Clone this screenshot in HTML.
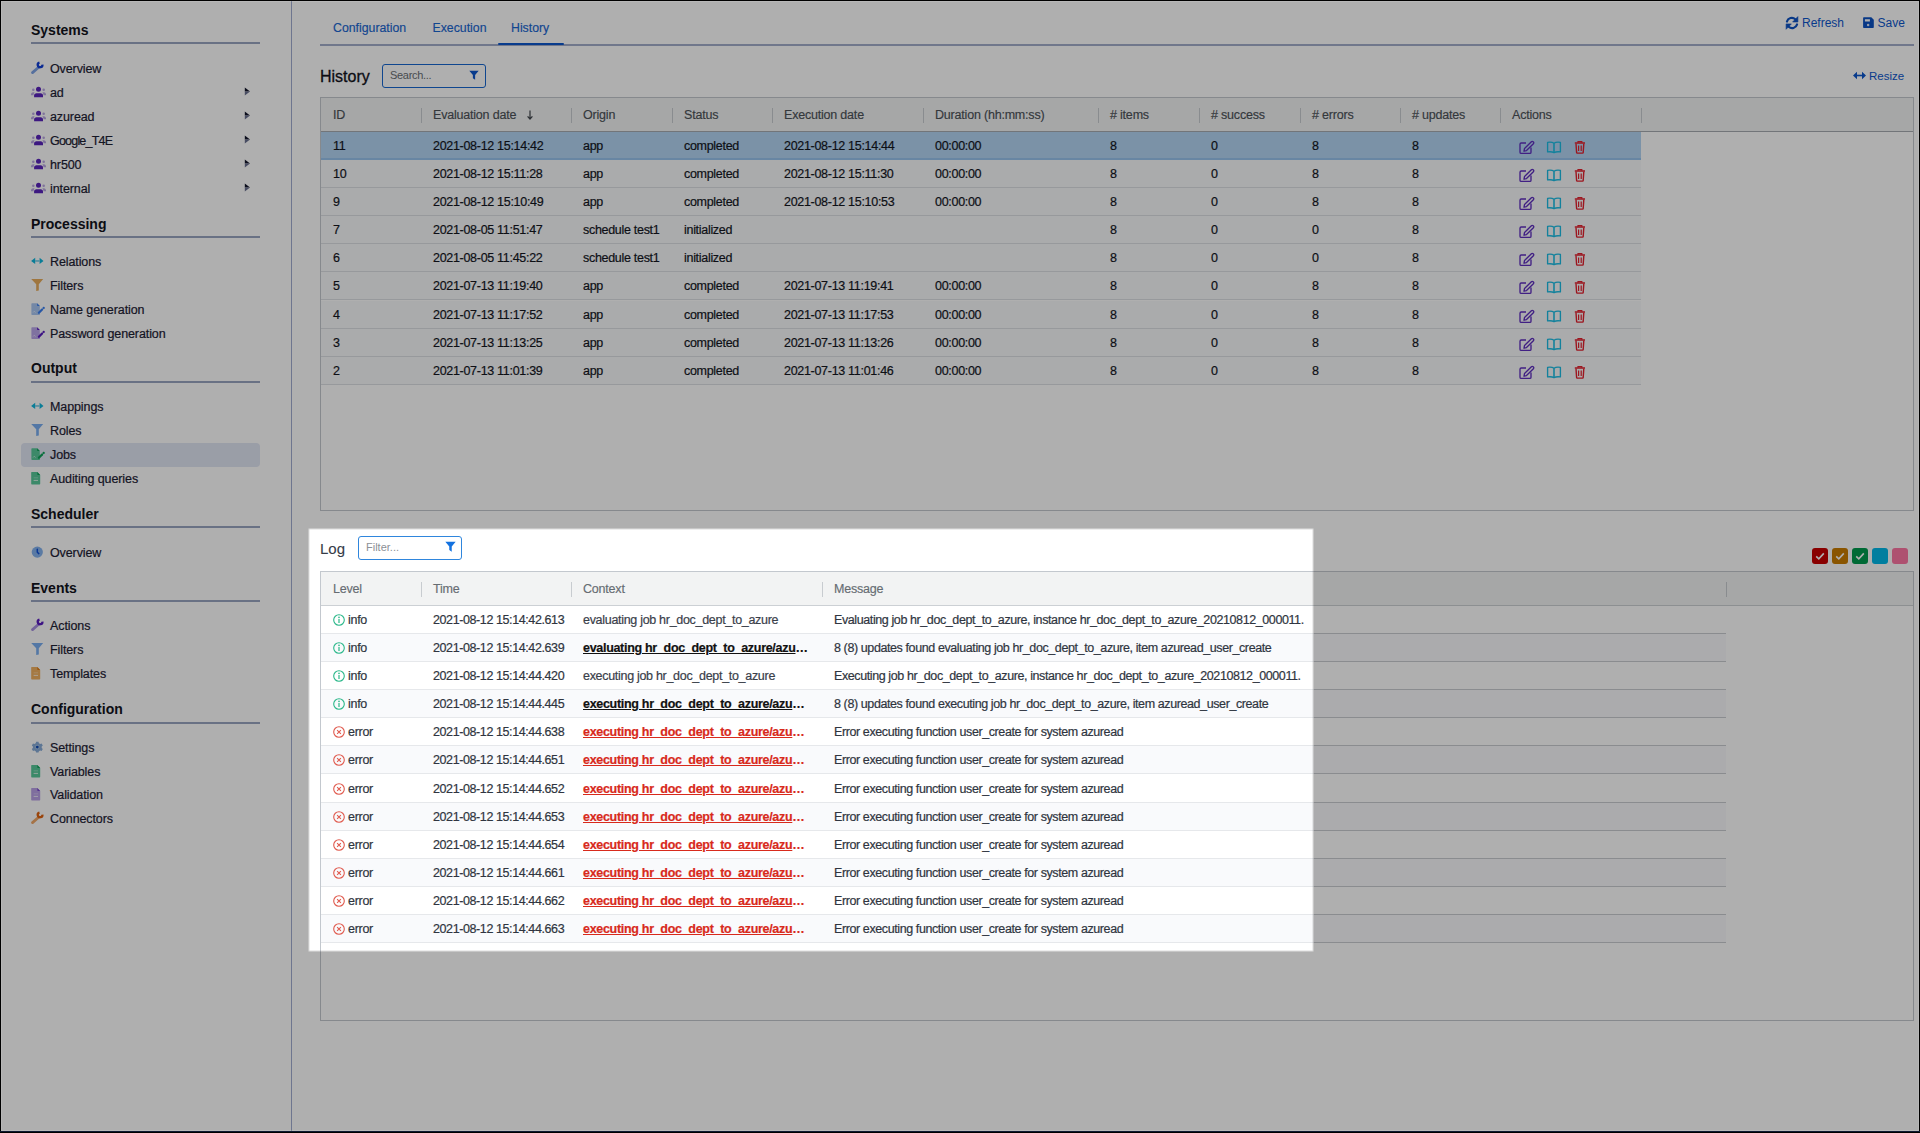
<!DOCTYPE html>
<html><head><meta charset="utf-8"><style>
*{box-sizing:border-box;margin:0;padding:0}
html,body{width:1920px;height:1133px;overflow:hidden;background:#fff;font-family:"Liberation Sans", sans-serif;color:#2c3340}
.ic{position:absolute;overflow:visible}
.sh{position:absolute;left:31px;font-size:14px;font-weight:700;color:#12131c;line-height:18px;white-space:nowrap}
.shl{position:absolute;left:31px;width:229px;height:2px;background:#9aa5c0}
.si{-webkit-text-stroke:0.2px currentColor;position:absolute;left:50px;font-size:12.5px;letter-spacing:-0.1px;color:#1c2033;line-height:20px;white-space:nowrap}
.jobsel{position:absolute;left:21px;top:443px;width:239px;height:24px;background:#e1e6f4;border-radius:4px}
#sidebar{position:absolute;left:0;top:0;width:292px;height:1133px;border-right:1px solid #a0acd0}
.tab{-webkit-text-stroke:0.15px currentColor;position:absolute;top:20px;font-size:12.3px;color:#1966d2;line-height:16px;white-space:nowrap}
.tbl{position:absolute;border:1px solid #c3c8ce;background:#fff;overflow:hidden}
.thead{position:absolute;left:0;top:0;right:0;background:#f2f3f3;border-bottom:1px solid #a6abb0}
.th{-webkit-text-stroke:0.15px currentColor;position:absolute;top:0.5px;height:33px;line-height:33px;padding-left:12px;font-size:12.5px;letter-spacing:-0.2px;color:#4c5258;white-space:nowrap}
.sep{position:absolute;top:10px;width:1px;height:15px;background:#c8ccd0}
.sort{font-size:12px;padding-left:6px}
.tr{position:absolute;left:0;height:28px;border-bottom:1px solid #dcdfe3;background:#fff}
.tr.alt{background:#f8f9fb}
.tr.hr{background:#f8f9fb}
.tr.sel{background:#b3d5f3;border-bottom:2px solid #98c4ee}
.td{-webkit-text-stroke:0.2px currentColor;position:absolute;top:1px;height:27px;line-height:27px;padding-left:12px;font-size:12.5px;letter-spacing:-0.3px;color:#14171f;white-space:nowrap;overflow:hidden;text-overflow:ellipsis}
.ai{position:absolute;top:7px;width:18px;height:16px;overflow:visible}
.log .th{color:#666c72}
.log .thead{border-bottom-color:#ccd0d4}
.log .tr{border-bottom:1px solid #e6e8eb}
.log .tr.lalt{background:#f9fafc}
.log .td{color:#2f3540}
.log .msg{letter-spacing:-0.4px}
.log .ctx{padding-right:14px}
.log .ctx{color:#3a404a}
.log .lnk{font-weight:700;color:#111;text-decoration:underline}
.log .red{color:#d82a1c}
.li{position:absolute;left:12px;top:7px;width:12px;height:12px}
.inp{position:absolute;border:1px solid #2f86dd;border-radius:3px;background:#fff}
.inp span{position:absolute;left:7px;top:0;line-height:21px;font-size:11px;color:#8c9096}
.frame{position:absolute;background:#000}
</style></head><body>
<div id="sidebar">
<div class="sh" style="top:21.4px">Systems</div>
<div class="shl" style="top:42.4px"></div>
<div class="sh" style="top:215.4px">Processing</div>
<div class="shl" style="top:235.5px"></div>
<div class="sh" style="top:359.4px">Output</div>
<div class="shl" style="top:381.4px"></div>
<div class="sh" style="top:504.9px">Scheduler</div>
<div class="shl" style="top:526.4px"></div>
<div class="sh" style="top:578.9px">Events</div>
<div class="shl" style="top:599.6px"></div>
<div class="sh" style="top:699.9px">Configuration</div>
<div class="shl" style="top:722.0px"></div>
<div class="si" style="top:58.5px">Overview</div>
<svg class="ic" style="left:28px;top:57.7px;width:20px;height:20px" viewBox="0 0 20 20"><path d="M4.5 14.6 L9.8 10" stroke="#7ea4e6" stroke-width="2.8" stroke-linecap="round"/><path d="M11.5 4.6 A2.35 2.35 0 1 0 14.4 6.6" stroke="#0f3ed6" stroke-width="2.3" fill="none"/></svg>
<div class="si" style="top:82.5px">ad</div>
<svg class="ic" style="left:28px;top:81.7px;width:20px;height:20px" viewBox="0 0 20 20"><circle cx="10.5" cy="7.3" r="2.5" fill="#5a24bc"/><path d="M6.1 15.3 V13.6 C6.1 12.2 7.1 11.3 8.4 11.3 H12.7 C14 11.3 15 12.2 15 13.6 V15.3Z" fill="#5a24bc"/><circle cx="5.3" cy="7.8" r="1.25" fill="#b9a6e2"/><circle cx="15.7" cy="7.8" r="1.25" fill="#b9a6e2"/><path d="M2.9 13.3 C2.9 11.2 3.8 10.3 5.4 10.3 C6.1 10.3 6.5 10.5 6.8 10.8 C5.9 11.4 5.5 12.3 5.5 13.3Z" fill="#b9a6e2"/><path d="M18.1 13.3 C18.1 11.2 17.2 10.3 15.6 10.3 C14.9 10.3 14.5 10.5 14.2 10.8 C15.1 11.4 15.5 12.3 15.5 13.3Z" fill="#b9a6e2"/></svg>
<svg class="ic" style="left:244px;top:86.5px;width:7px;height:9px" viewBox="0 0 7 9"><path d="M0.8 0.4 L6 4.6 H0.8Z" fill="#12152a"/><path d="M0.8 4.6 H6 L0.8 8.6Z" fill="#6a7090"/></svg>
<div class="si" style="top:106.5px">azuread</div>
<svg class="ic" style="left:28px;top:105.7px;width:20px;height:20px" viewBox="0 0 20 20"><circle cx="10.5" cy="7.3" r="2.5" fill="#5a24bc"/><path d="M6.1 15.3 V13.6 C6.1 12.2 7.1 11.3 8.4 11.3 H12.7 C14 11.3 15 12.2 15 13.6 V15.3Z" fill="#5a24bc"/><circle cx="5.3" cy="7.8" r="1.25" fill="#b9a6e2"/><circle cx="15.7" cy="7.8" r="1.25" fill="#b9a6e2"/><path d="M2.9 13.3 C2.9 11.2 3.8 10.3 5.4 10.3 C6.1 10.3 6.5 10.5 6.8 10.8 C5.9 11.4 5.5 12.3 5.5 13.3Z" fill="#b9a6e2"/><path d="M18.1 13.3 C18.1 11.2 17.2 10.3 15.6 10.3 C14.9 10.3 14.5 10.5 14.2 10.8 C15.1 11.4 15.5 12.3 15.5 13.3Z" fill="#b9a6e2"/></svg>
<svg class="ic" style="left:244px;top:110.5px;width:7px;height:9px" viewBox="0 0 7 9"><path d="M0.8 0.4 L6 4.6 H0.8Z" fill="#12152a"/><path d="M0.8 4.6 H6 L0.8 8.6Z" fill="#6a7090"/></svg>
<div class="si" style="top:130.5px;letter-spacing:-0.8px">Google_T4E</div>
<svg class="ic" style="left:28px;top:129.7px;width:20px;height:20px" viewBox="0 0 20 20"><circle cx="10.5" cy="7.3" r="2.5" fill="#5a24bc"/><path d="M6.1 15.3 V13.6 C6.1 12.2 7.1 11.3 8.4 11.3 H12.7 C14 11.3 15 12.2 15 13.6 V15.3Z" fill="#5a24bc"/><circle cx="5.3" cy="7.8" r="1.25" fill="#b9a6e2"/><circle cx="15.7" cy="7.8" r="1.25" fill="#b9a6e2"/><path d="M2.9 13.3 C2.9 11.2 3.8 10.3 5.4 10.3 C6.1 10.3 6.5 10.5 6.8 10.8 C5.9 11.4 5.5 12.3 5.5 13.3Z" fill="#b9a6e2"/><path d="M18.1 13.3 C18.1 11.2 17.2 10.3 15.6 10.3 C14.9 10.3 14.5 10.5 14.2 10.8 C15.1 11.4 15.5 12.3 15.5 13.3Z" fill="#b9a6e2"/></svg>
<svg class="ic" style="left:244px;top:134.5px;width:7px;height:9px" viewBox="0 0 7 9"><path d="M0.8 0.4 L6 4.6 H0.8Z" fill="#12152a"/><path d="M0.8 4.6 H6 L0.8 8.6Z" fill="#6a7090"/></svg>
<div class="si" style="top:154.8px">hr500</div>
<svg class="ic" style="left:28px;top:154.0px;width:20px;height:20px" viewBox="0 0 20 20"><circle cx="10.5" cy="7.3" r="2.5" fill="#5a24bc"/><path d="M6.1 15.3 V13.6 C6.1 12.2 7.1 11.3 8.4 11.3 H12.7 C14 11.3 15 12.2 15 13.6 V15.3Z" fill="#5a24bc"/><circle cx="5.3" cy="7.8" r="1.25" fill="#b9a6e2"/><circle cx="15.7" cy="7.8" r="1.25" fill="#b9a6e2"/><path d="M2.9 13.3 C2.9 11.2 3.8 10.3 5.4 10.3 C6.1 10.3 6.5 10.5 6.8 10.8 C5.9 11.4 5.5 12.3 5.5 13.3Z" fill="#b9a6e2"/><path d="M18.1 13.3 C18.1 11.2 17.2 10.3 15.6 10.3 C14.9 10.3 14.5 10.5 14.2 10.8 C15.1 11.4 15.5 12.3 15.5 13.3Z" fill="#b9a6e2"/></svg>
<svg class="ic" style="left:244px;top:158.8px;width:7px;height:9px" viewBox="0 0 7 9"><path d="M0.8 0.4 L6 4.6 H0.8Z" fill="#12152a"/><path d="M0.8 4.6 H6 L0.8 8.6Z" fill="#6a7090"/></svg>
<div class="si" style="top:179.1px">internal</div>
<svg class="ic" style="left:28px;top:178.3px;width:20px;height:20px" viewBox="0 0 20 20"><circle cx="10.5" cy="7.3" r="2.5" fill="#5a24bc"/><path d="M6.1 15.3 V13.6 C6.1 12.2 7.1 11.3 8.4 11.3 H12.7 C14 11.3 15 12.2 15 13.6 V15.3Z" fill="#5a24bc"/><circle cx="5.3" cy="7.8" r="1.25" fill="#b9a6e2"/><circle cx="15.7" cy="7.8" r="1.25" fill="#b9a6e2"/><path d="M2.9 13.3 C2.9 11.2 3.8 10.3 5.4 10.3 C6.1 10.3 6.5 10.5 6.8 10.8 C5.9 11.4 5.5 12.3 5.5 13.3Z" fill="#b9a6e2"/><path d="M18.1 13.3 C18.1 11.2 17.2 10.3 15.6 10.3 C14.9 10.3 14.5 10.5 14.2 10.8 C15.1 11.4 15.5 12.3 15.5 13.3Z" fill="#b9a6e2"/></svg>
<svg class="ic" style="left:244px;top:183.1px;width:7px;height:9px" viewBox="0 0 7 9"><path d="M0.8 0.4 L6 4.6 H0.8Z" fill="#12152a"/><path d="M0.8 4.6 H6 L0.8 8.6Z" fill="#6a7090"/></svg>
<div class="si" style="top:251.9px">Relations</div>
<svg class="ic" style="left:28px;top:251.1px;width:20px;height:20px" viewBox="0 0 20 20"><path d="M3.1 9.9 L7.2 6.8 V13Z M15.5 9.9 L11.6 6.8 V13Z" fill="#0fb6dc"/><rect x="7" y="9.1" width="4.8" height="1.7" fill="#7fd2ea"/></svg>
<div class="si" style="top:275.8px">Filters</div>
<svg class="ic" style="left:28px;top:275.0px;width:20px;height:20px" viewBox="0 0 20 20"><path d="M3.2 4 H15.2 L10.8 9.2 V15.6 L8.2 16 V9.2Z" fill="#e8ad5c"/></svg>
<div class="si" style="top:299.7px">Name generation</div>
<svg class="ic" style="left:28px;top:298.9px;width:20px;height:20px" viewBox="0 0 20 20"><path d="M4 4.3 H9.2 L11.8 7 V15.9 H4 C3.6 15.9 3.4 15.6 3.4 15.3 V4.9 C3.4 4.6 3.6 4.3 4 4.3Z" fill="#a9c6f2"/><path d="M9.1 4.3 L11.8 7.1 H9.6 C9.3 7.1 9.1 6.9 9.1 6.6Z" fill="#3a7ff0"/><path d="M10.9 13.7 L14.1 10.5" stroke="#3a7ff0" stroke-width="2.3" stroke-linecap="round"/><circle cx="15.7" cy="8.9" r="1.15" fill="#3a7ff0"/><path d="M5 13.6 L6.3 12.2 L7.6 13.6" stroke="#fff" stroke-width="0.8" fill="none" opacity="0.6"/></svg>
<div class="si" style="top:323.6px">Password generation</div>
<svg class="ic" style="left:28px;top:322.8px;width:20px;height:20px" viewBox="0 0 20 20"><path d="M4 4.3 H9.2 L11.8 7 V15.9 H4 C3.6 15.9 3.4 15.6 3.4 15.3 V4.9 C3.4 4.6 3.6 4.3 4 4.3Z" fill="#baa6ea"/><path d="M9.1 4.3 L11.8 7.1 H9.6 C9.3 7.1 9.1 6.9 9.1 6.6Z" fill="#5a1cc0"/><path d="M10.9 13.7 L14.1 10.5" stroke="#5a1cc0" stroke-width="2.3" stroke-linecap="round"/><circle cx="15.7" cy="8.9" r="1.15" fill="#5a1cc0"/><path d="M5 13.6 L6.3 12.2 L7.6 13.6" stroke="#fff" stroke-width="0.8" fill="none" opacity="0.6"/></svg>
<div class="si" style="top:396.5px">Mappings</div>
<svg class="ic" style="left:28px;top:395.7px;width:20px;height:20px" viewBox="0 0 20 20"><path d="M3.1 9.9 L7.2 6.8 V13Z M15.5 9.9 L11.6 6.8 V13Z" fill="#0fb6dc"/><rect x="7" y="9.1" width="4.8" height="1.7" fill="#7fd2ea"/></svg>
<div class="si" style="top:421.0px">Roles</div>
<svg class="ic" style="left:28px;top:420.2px;width:20px;height:20px" viewBox="0 0 20 20"><path d="M3.2 4 H15.2 L10.8 9.2 V15.6 L8.2 16 V9.2Z" fill="#7aaef0"/></svg>
<div class="jobsel"></div>
<div class="si" style="top:445.0px">Jobs</div>
<svg class="ic" style="left:28px;top:444.2px;width:20px;height:20px" viewBox="0 0 20 20"><path d="M4 4.3 H9.2 L11.8 7 V15.9 H4 C3.6 15.9 3.4 15.6 3.4 15.3 V4.9 C3.4 4.6 3.6 4.3 4 4.3Z" fill="#58c89a"/><path d="M9.1 4.3 L11.8 7.1 H9.6 C9.3 7.1 9.1 6.9 9.1 6.6Z" fill="#0ea35a"/><path d="M10.9 13.7 L14.1 10.5" stroke="#0ea35a" stroke-width="2.3" stroke-linecap="round"/><circle cx="15.7" cy="8.9" r="1.15" fill="#0ea35a"/><path d="M5 13.6 L6.3 12.2 L7.6 13.6" stroke="#fff" stroke-width="0.8" fill="none" opacity="0.6"/></svg>
<div class="si" style="top:468.9px">Auditing queries</div>
<svg class="ic" style="left:28px;top:468.1px;width:20px;height:20px" viewBox="0 0 20 20"><path d="M3.8 4 H9.4 L12.2 6.9 V15.8 C12.2 16.1 11.9 16.4 11.6 16.4 H3.8 C3.5 16.4 3.2 16.1 3.2 15.8 V4.6 C3.2 4.3 3.5 4 3.8 4Z" fill="#58c89a"/><path d="M9.3 4 L12.2 6.9 H9.9 C9.6 6.9 9.3 6.6 9.3 6.3Z" fill="#0ea35a"/><rect x="5.6" y="9.4" width="4.4" height="0.9" fill="#fff" opacity="0.35"/><rect x="5.6" y="11.9" width="4.4" height="1" fill="#fff" opacity="0.75"/></svg>
<div class="si" style="top:543.0px">Overview</div>
<svg class="ic" style="left:28px;top:542.2px;width:20px;height:20px" viewBox="0 0 20 20"><circle cx="9.3" cy="10.1" r="5.6" fill="#84b2ee"/><path d="M9.3 7.3 V10.3 L10.8 11.6" stroke="#0f50d8" stroke-width="1.5" fill="none" stroke-linecap="round" stroke-linejoin="round"/></svg>
<div class="si" style="top:615.9px">Actions</div>
<svg class="ic" style="left:28px;top:615.1px;width:20px;height:20px" viewBox="0 0 20 20"><path d="M4.5 14.6 L9.8 10" stroke="#a890e0" stroke-width="2.8" stroke-linecap="round"/><path d="M11.5 4.6 A2.35 2.35 0 1 0 14.4 6.6" stroke="#5a1cc0" stroke-width="2.3" fill="none"/></svg>
<div class="si" style="top:639.9px">Filters</div>
<svg class="ic" style="left:28px;top:639.1px;width:20px;height:20px" viewBox="0 0 20 20"><path d="M3.2 4 H15.2 L10.8 9.2 V15.6 L8.2 16 V9.2Z" fill="#7aaef0"/></svg>
<div class="si" style="top:663.9px">Templates</div>
<svg class="ic" style="left:28px;top:663.1px;width:20px;height:20px" viewBox="0 0 20 20"><path d="M3.8 4 H9.4 L12.2 6.9 V15.8 C12.2 16.1 11.9 16.4 11.6 16.4 H3.8 C3.5 16.4 3.2 16.1 3.2 15.8 V4.6 C3.2 4.3 3.5 4 3.8 4Z" fill="#f0b060"/><path d="M9.3 4 L12.2 6.9 H9.9 C9.6 6.9 9.3 6.6 9.3 6.3Z" fill="#e07a10"/><rect x="5.6" y="9.4" width="4.4" height="0.9" fill="#fff" opacity="0.35"/><rect x="5.6" y="11.9" width="4.4" height="1" fill="#fff" opacity="0.75"/></svg>
<div class="si" style="top:738.0px">Settings</div>
<svg class="ic" style="left:28px;top:737.2px;width:20px;height:20px" viewBox="0 0 20 20"><g transform="translate(9.3 10.1)"><path d="M-1.2 -5.4 H1.2 L1.6 -3.9 L2.9 -3.2 L4.3 -3.7 L5.5 -1.6 L4.4 -0.6 V0.8 L5.5 1.8 L4.3 3.9 L2.9 3.4 L1.6 4.1 L1.2 5.5 H-1.2 L-1.6 4.1 L-2.9 3.4 L-4.3 3.9 L-5.5 1.8 L-4.4 0.8 V-0.6 L-5.5 -1.6 L-4.3 -3.7 L-2.9 -3.2 L-1.6 -3.9Z" fill="#88acd8"/><circle r="2.3" fill="#fff" opacity="0.25"/><circle r="1.4" fill="#0f4cb8"/></g></svg>
<div class="si" style="top:762.0px">Variables</div>
<svg class="ic" style="left:28px;top:761.2px;width:20px;height:20px" viewBox="0 0 20 20"><path d="M3.8 4 H9.4 L12.2 6.9 V15.8 C12.2 16.1 11.9 16.4 11.6 16.4 H3.8 C3.5 16.4 3.2 16.1 3.2 15.8 V4.6 C3.2 4.3 3.5 4 3.8 4Z" fill="#58c89a"/><path d="M9.3 4 L12.2 6.9 H9.9 C9.6 6.9 9.3 6.6 9.3 6.3Z" fill="#0ea35a"/><rect x="5.6" y="9.4" width="4.4" height="0.9" fill="#fff" opacity="0.35"/><rect x="5.6" y="11.9" width="4.4" height="1" fill="#fff" opacity="0.75"/></svg>
<div class="si" style="top:785.1px">Validation</div>
<svg class="ic" style="left:28px;top:784.3px;width:20px;height:20px" viewBox="0 0 20 20"><path d="M3.8 4 H9.4 L12.2 6.9 V15.8 C12.2 16.1 11.9 16.4 11.6 16.4 H3.8 C3.5 16.4 3.2 16.1 3.2 15.8 V4.6 C3.2 4.3 3.5 4 3.8 4Z" fill="#b9a0e6"/><path d="M9.3 4 L12.2 6.9 H9.9 C9.6 6.9 9.3 6.6 9.3 6.3Z" fill="#7a48d0"/><rect x="5.6" y="9.4" width="4.4" height="0.9" fill="#fff" opacity="0.35"/><rect x="5.6" y="11.9" width="4.4" height="1" fill="#fff" opacity="0.75"/></svg>
<div class="si" style="top:809.1px">Connectors</div>
<svg class="ic" style="left:28px;top:808.3px;width:20px;height:20px" viewBox="0 0 20 20"><path d="M4.5 14.6 L9.8 10" stroke="#f0a868" stroke-width="2.8" stroke-linecap="round"/><path d="M11.5 4.6 A2.35 2.35 0 1 0 14.4 6.6" stroke="#e06410" stroke-width="2.3" fill="none"/></svg>
</div>

<div class="tab" style="left:333px">Configuration</div>
<div class="tab" style="left:432.5px">Execution</div>
<div class="tab" style="left:511px">History</div>
<div style="position:absolute;left:320px;top:44px;width:1594px;height:1.6px;background:#a3aecb"></div>
<div style="position:absolute;left:498px;top:42.8px;width:65.5px;height:2.4px;background:#0d56cc;border-radius:1px"></div>
<svg class="ic" style="left:1782px;top:13px;width:20px;height:20px" viewBox="0 0 20 20"><path d="M4.9 8.6 A5.1 5.1 0 0 1 13.3 6.3" stroke="#0d52c4" stroke-width="2.1" fill="none" stroke-linecap="round"/><path d="M15.9 3.6 V9 H10.6Z" fill="#0d52c4" stroke="#0d52c4" stroke-width="0.6" stroke-linejoin="round"/><path d="M15.1 11.4 A5.1 5.1 0 0 1 6.7 13.7" stroke="#0d52c4" stroke-width="2.1" fill="none" stroke-linecap="round"/><path d="M4.1 10.9 H9.4 L4.1 16.3Z" fill="#0d52c4" stroke="#0d52c4" stroke-width="0.6" stroke-linejoin="round"/></svg>
<div style="position:absolute;left:1802px;top:15px;font-size:12px;line-height:16px;color:#0d56cc">Refresh</div>
<svg class="ic" style="left:1859px;top:13px;width:20px;height:20px" viewBox="0 0 20 20"><path d="M5.1 4.2 H12.3 L14.8 6.8 V14 C14.8 14.6 14.4 15 13.8 15 H5.1 C4.5 15 4.1 14.6 4.1 14 V5.2 C4.1 4.6 4.5 4.2 5.1 4.2Z M5.9 6.2 V8.6 H10.9 V6.2Z" fill="#0d52c4" fill-rule="evenodd"/><circle cx="9.1" cy="12.1" r="1.25" fill="#fff" opacity="0.85"/></svg>
<div style="position:absolute;left:1877.5px;top:15px;font-size:12px;line-height:16px;color:#0d56cc">Save</div>
<div style="position:absolute;left:320px;top:68px;font-size:16px;line-height:18px;color:#12131c;-webkit-text-stroke:0.3px currentColor">History</div>
<div class="inp" style="left:382px;top:64px;width:104px;height:24px;border-width:1.5px;border-color:#1766d0"><span style="color:#6a6f74;letter-spacing:-0.3px">Search...</span></div>
<svg class="ic" style="left:469px;top:70px;width:10px;height:10px" viewBox="0 0 16 16"><path d="M0.5 1 H15.5 L9.8 8 V15.5 L6.2 13 V8Z" fill="#0d56cc"/></svg>
<svg class="ic" style="left:1853px;top:71px;width:13px;height:9px" viewBox="0 0 13 9"><path d="M0 4.5 L4 0.8 V8.2Z M13 4.5 L9 0.8 V8.2Z" fill="#0d56cc"/><rect x="3" y="3.7" width="7" height="1.6" fill="#0d56cc"/></svg>
<div style="position:absolute;left:1869px;top:68px;font-size:11.5px;line-height:16px;color:#0d56cc">Resize</div>

<div class="tbl" style="left:320px;top:97px;width:1594px;height:414px">
<div class="thead" style="height:34px">
<div class="th" style="left:0px;width:100px">ID</div><div class="sep" style="left:100px"></div>
<div class="th" style="left:100px;width:150px">Evaluation date<svg style="position:absolute;left:106px;top:11px;width:6px;height:10px" viewBox="0 0 6 10"><path d="M3 0.5 V9 M0.6 6.4 L3 9 L5.4 6.4" stroke="#40464c" stroke-width="1.2" fill="none"/></svg></div><div class="sep" style="left:250px"></div>
<div class="th" style="left:250px;width:101px">Origin</div><div class="sep" style="left:351px"></div>
<div class="th" style="left:351px;width:100px">Status</div><div class="sep" style="left:451px"></div>
<div class="th" style="left:451px;width:151px">Execution date</div><div class="sep" style="left:602px"></div>
<div class="th" style="left:602px;width:175px">Duration (hh:mm:ss)</div><div class="sep" style="left:777px"></div>
<div class="th" style="left:777px;width:101px"># items</div><div class="sep" style="left:878px"></div>
<div class="th" style="left:878px;width:101px"># success</div><div class="sep" style="left:979px"></div>
<div class="th" style="left:979px;width:100px"># errors</div><div class="sep" style="left:1079px"></div>
<div class="th" style="left:1079px;width:100px"># updates</div><div class="sep" style="left:1179px"></div>
<div class="th" style="left:1179px;width:141px">Actions</div><div class="sep" style="left:1320px"></div>
</div>
<div class="tr sel" style="top:34.00px;width:1320px">
<div class="td" style="left:0px;width:100px">11</div>
<div class="td" style="left:100px;width:150px">2021-08-12 15:14:42</div>
<div class="td" style="left:250px;width:101px">app</div>
<div class="td" style="left:351px;width:100px">completed</div>
<div class="td" style="left:451px;width:151px">2021-08-12 15:14:44</div>
<div class="td" style="left:602px;width:175px">00:00:00</div>
<div class="td" style="left:777px;width:101px">8</div>
<div class="td" style="left:878px;width:101px">0</div>
<div class="td" style="left:979px;width:100px">8</div>
<div class="td" style="left:1079px;width:100px">8</div>
<svg class="ai" style="left:1197px" viewBox="0 0 18 16"><path d="M8 4 H3.2 C2.5 4 2 4.5 2 5.2 V13.2 C2 13.9 2.5 14.4 3.2 14.4 H11.8 C12.5 14.4 13 13.9 13 13.2 V8.5" stroke="#5f2fc0" stroke-width="1.35" fill="none"/><path d="M6 12.2 L6.5 9.6 L13.4 2.7 C13.9 2.2 14.6 2.2 15.1 2.7 L15.4 3 C15.9 3.5 15.9 4.2 15.4 4.7 L8.5 11.6Z" stroke="#5f2fc0" stroke-width="1.35" fill="none" stroke-linejoin="round"/></svg><svg class="ai" style="left:1224px" viewBox="0 0 18 16"><path d="M9 4.2 C7.6 3.2 5 2.9 2.6 3.3 V12.9 C5 12.6 7.6 12.8 9 13.6 C10.4 12.8 13 12.6 15.4 12.9 V3.3 C13 2.9 10.4 3.2 9 4.2Z" stroke="#1cbde4" stroke-width="1.35" fill="none" stroke-linejoin="round"/><path d="M9 4.2 V13.6" stroke="#1cbde4" stroke-width="1.6"/></svg><svg class="ai" style="left:1251px" viewBox="0 0 18 16"><path d="M2.8 4 H13" stroke="#e3202e" stroke-width="1.5"/><path d="M6 3.8 V2.6 H9.8 V3.8" stroke="#e3202e" stroke-width="1.2" fill="none"/><path d="M4 4.6 L4.6 13.4 C4.6 13.8 4.9 14.1 5.3 14.1 H10.5 C10.9 14.1 11.2 13.8 11.2 13.4 L11.8 4.6" stroke="#e3202e" stroke-width="1.4" fill="none"/><path d="M6.6 6.5 V12 M9.2 6.5 V12" stroke="#e3202e" stroke-width="1.2"/></svg>
</div>
<div class="tr hr" style="top:62.09px;width:1320px">
<div class="td" style="left:0px;width:100px">10</div>
<div class="td" style="left:100px;width:150px">2021-08-12 15:11:28</div>
<div class="td" style="left:250px;width:101px">app</div>
<div class="td" style="left:351px;width:100px">completed</div>
<div class="td" style="left:451px;width:151px">2021-08-12 15:11:30</div>
<div class="td" style="left:602px;width:175px">00:00:00</div>
<div class="td" style="left:777px;width:101px">8</div>
<div class="td" style="left:878px;width:101px">0</div>
<div class="td" style="left:979px;width:100px">8</div>
<div class="td" style="left:1079px;width:100px">8</div>
<svg class="ai" style="left:1197px" viewBox="0 0 18 16"><path d="M8 4 H3.2 C2.5 4 2 4.5 2 5.2 V13.2 C2 13.9 2.5 14.4 3.2 14.4 H11.8 C12.5 14.4 13 13.9 13 13.2 V8.5" stroke="#5f2fc0" stroke-width="1.35" fill="none"/><path d="M6 12.2 L6.5 9.6 L13.4 2.7 C13.9 2.2 14.6 2.2 15.1 2.7 L15.4 3 C15.9 3.5 15.9 4.2 15.4 4.7 L8.5 11.6Z" stroke="#5f2fc0" stroke-width="1.35" fill="none" stroke-linejoin="round"/></svg><svg class="ai" style="left:1224px" viewBox="0 0 18 16"><path d="M9 4.2 C7.6 3.2 5 2.9 2.6 3.3 V12.9 C5 12.6 7.6 12.8 9 13.6 C10.4 12.8 13 12.6 15.4 12.9 V3.3 C13 2.9 10.4 3.2 9 4.2Z" stroke="#1cbde4" stroke-width="1.35" fill="none" stroke-linejoin="round"/><path d="M9 4.2 V13.6" stroke="#1cbde4" stroke-width="1.6"/></svg><svg class="ai" style="left:1251px" viewBox="0 0 18 16"><path d="M2.8 4 H13" stroke="#e3202e" stroke-width="1.5"/><path d="M6 3.8 V2.6 H9.8 V3.8" stroke="#e3202e" stroke-width="1.2" fill="none"/><path d="M4 4.6 L4.6 13.4 C4.6 13.8 4.9 14.1 5.3 14.1 H10.5 C10.9 14.1 11.2 13.8 11.2 13.4 L11.8 4.6" stroke="#e3202e" stroke-width="1.4" fill="none"/><path d="M6.6 6.5 V12 M9.2 6.5 V12" stroke="#e3202e" stroke-width="1.2"/></svg>
</div>
<div class="tr hr" style="top:90.18px;width:1320px">
<div class="td" style="left:0px;width:100px">9</div>
<div class="td" style="left:100px;width:150px">2021-08-12 15:10:49</div>
<div class="td" style="left:250px;width:101px">app</div>
<div class="td" style="left:351px;width:100px">completed</div>
<div class="td" style="left:451px;width:151px">2021-08-12 15:10:53</div>
<div class="td" style="left:602px;width:175px">00:00:00</div>
<div class="td" style="left:777px;width:101px">8</div>
<div class="td" style="left:878px;width:101px">0</div>
<div class="td" style="left:979px;width:100px">8</div>
<div class="td" style="left:1079px;width:100px">8</div>
<svg class="ai" style="left:1197px" viewBox="0 0 18 16"><path d="M8 4 H3.2 C2.5 4 2 4.5 2 5.2 V13.2 C2 13.9 2.5 14.4 3.2 14.4 H11.8 C12.5 14.4 13 13.9 13 13.2 V8.5" stroke="#5f2fc0" stroke-width="1.35" fill="none"/><path d="M6 12.2 L6.5 9.6 L13.4 2.7 C13.9 2.2 14.6 2.2 15.1 2.7 L15.4 3 C15.9 3.5 15.9 4.2 15.4 4.7 L8.5 11.6Z" stroke="#5f2fc0" stroke-width="1.35" fill="none" stroke-linejoin="round"/></svg><svg class="ai" style="left:1224px" viewBox="0 0 18 16"><path d="M9 4.2 C7.6 3.2 5 2.9 2.6 3.3 V12.9 C5 12.6 7.6 12.8 9 13.6 C10.4 12.8 13 12.6 15.4 12.9 V3.3 C13 2.9 10.4 3.2 9 4.2Z" stroke="#1cbde4" stroke-width="1.35" fill="none" stroke-linejoin="round"/><path d="M9 4.2 V13.6" stroke="#1cbde4" stroke-width="1.6"/></svg><svg class="ai" style="left:1251px" viewBox="0 0 18 16"><path d="M2.8 4 H13" stroke="#e3202e" stroke-width="1.5"/><path d="M6 3.8 V2.6 H9.8 V3.8" stroke="#e3202e" stroke-width="1.2" fill="none"/><path d="M4 4.6 L4.6 13.4 C4.6 13.8 4.9 14.1 5.3 14.1 H10.5 C10.9 14.1 11.2 13.8 11.2 13.4 L11.8 4.6" stroke="#e3202e" stroke-width="1.4" fill="none"/><path d="M6.6 6.5 V12 M9.2 6.5 V12" stroke="#e3202e" stroke-width="1.2"/></svg>
</div>
<div class="tr hr" style="top:118.27px;width:1320px">
<div class="td" style="left:0px;width:100px">7</div>
<div class="td" style="left:100px;width:150px">2021-08-05 11:51:47</div>
<div class="td" style="left:250px;width:101px">schedule test1</div>
<div class="td" style="left:351px;width:100px">initialized</div>
<div class="td" style="left:451px;width:151px"></div>
<div class="td" style="left:602px;width:175px"></div>
<div class="td" style="left:777px;width:101px">8</div>
<div class="td" style="left:878px;width:101px">0</div>
<div class="td" style="left:979px;width:100px">0</div>
<div class="td" style="left:1079px;width:100px">8</div>
<svg class="ai" style="left:1197px" viewBox="0 0 18 16"><path d="M8 4 H3.2 C2.5 4 2 4.5 2 5.2 V13.2 C2 13.9 2.5 14.4 3.2 14.4 H11.8 C12.5 14.4 13 13.9 13 13.2 V8.5" stroke="#5f2fc0" stroke-width="1.35" fill="none"/><path d="M6 12.2 L6.5 9.6 L13.4 2.7 C13.9 2.2 14.6 2.2 15.1 2.7 L15.4 3 C15.9 3.5 15.9 4.2 15.4 4.7 L8.5 11.6Z" stroke="#5f2fc0" stroke-width="1.35" fill="none" stroke-linejoin="round"/></svg><svg class="ai" style="left:1224px" viewBox="0 0 18 16"><path d="M9 4.2 C7.6 3.2 5 2.9 2.6 3.3 V12.9 C5 12.6 7.6 12.8 9 13.6 C10.4 12.8 13 12.6 15.4 12.9 V3.3 C13 2.9 10.4 3.2 9 4.2Z" stroke="#1cbde4" stroke-width="1.35" fill="none" stroke-linejoin="round"/><path d="M9 4.2 V13.6" stroke="#1cbde4" stroke-width="1.6"/></svg><svg class="ai" style="left:1251px" viewBox="0 0 18 16"><path d="M2.8 4 H13" stroke="#e3202e" stroke-width="1.5"/><path d="M6 3.8 V2.6 H9.8 V3.8" stroke="#e3202e" stroke-width="1.2" fill="none"/><path d="M4 4.6 L4.6 13.4 C4.6 13.8 4.9 14.1 5.3 14.1 H10.5 C10.9 14.1 11.2 13.8 11.2 13.4 L11.8 4.6" stroke="#e3202e" stroke-width="1.4" fill="none"/><path d="M6.6 6.5 V12 M9.2 6.5 V12" stroke="#e3202e" stroke-width="1.2"/></svg>
</div>
<div class="tr hr" style="top:146.36px;width:1320px">
<div class="td" style="left:0px;width:100px">6</div>
<div class="td" style="left:100px;width:150px">2021-08-05 11:45:22</div>
<div class="td" style="left:250px;width:101px">schedule test1</div>
<div class="td" style="left:351px;width:100px">initialized</div>
<div class="td" style="left:451px;width:151px"></div>
<div class="td" style="left:602px;width:175px"></div>
<div class="td" style="left:777px;width:101px">8</div>
<div class="td" style="left:878px;width:101px">0</div>
<div class="td" style="left:979px;width:100px">0</div>
<div class="td" style="left:1079px;width:100px">8</div>
<svg class="ai" style="left:1197px" viewBox="0 0 18 16"><path d="M8 4 H3.2 C2.5 4 2 4.5 2 5.2 V13.2 C2 13.9 2.5 14.4 3.2 14.4 H11.8 C12.5 14.4 13 13.9 13 13.2 V8.5" stroke="#5f2fc0" stroke-width="1.35" fill="none"/><path d="M6 12.2 L6.5 9.6 L13.4 2.7 C13.9 2.2 14.6 2.2 15.1 2.7 L15.4 3 C15.9 3.5 15.9 4.2 15.4 4.7 L8.5 11.6Z" stroke="#5f2fc0" stroke-width="1.35" fill="none" stroke-linejoin="round"/></svg><svg class="ai" style="left:1224px" viewBox="0 0 18 16"><path d="M9 4.2 C7.6 3.2 5 2.9 2.6 3.3 V12.9 C5 12.6 7.6 12.8 9 13.6 C10.4 12.8 13 12.6 15.4 12.9 V3.3 C13 2.9 10.4 3.2 9 4.2Z" stroke="#1cbde4" stroke-width="1.35" fill="none" stroke-linejoin="round"/><path d="M9 4.2 V13.6" stroke="#1cbde4" stroke-width="1.6"/></svg><svg class="ai" style="left:1251px" viewBox="0 0 18 16"><path d="M2.8 4 H13" stroke="#e3202e" stroke-width="1.5"/><path d="M6 3.8 V2.6 H9.8 V3.8" stroke="#e3202e" stroke-width="1.2" fill="none"/><path d="M4 4.6 L4.6 13.4 C4.6 13.8 4.9 14.1 5.3 14.1 H10.5 C10.9 14.1 11.2 13.8 11.2 13.4 L11.8 4.6" stroke="#e3202e" stroke-width="1.4" fill="none"/><path d="M6.6 6.5 V12 M9.2 6.5 V12" stroke="#e3202e" stroke-width="1.2"/></svg>
</div>
<div class="tr hr" style="top:174.45px;width:1320px">
<div class="td" style="left:0px;width:100px">5</div>
<div class="td" style="left:100px;width:150px">2021-07-13 11:19:40</div>
<div class="td" style="left:250px;width:101px">app</div>
<div class="td" style="left:351px;width:100px">completed</div>
<div class="td" style="left:451px;width:151px">2021-07-13 11:19:41</div>
<div class="td" style="left:602px;width:175px">00:00:00</div>
<div class="td" style="left:777px;width:101px">8</div>
<div class="td" style="left:878px;width:101px">0</div>
<div class="td" style="left:979px;width:100px">8</div>
<div class="td" style="left:1079px;width:100px">8</div>
<svg class="ai" style="left:1197px" viewBox="0 0 18 16"><path d="M8 4 H3.2 C2.5 4 2 4.5 2 5.2 V13.2 C2 13.9 2.5 14.4 3.2 14.4 H11.8 C12.5 14.4 13 13.9 13 13.2 V8.5" stroke="#5f2fc0" stroke-width="1.35" fill="none"/><path d="M6 12.2 L6.5 9.6 L13.4 2.7 C13.9 2.2 14.6 2.2 15.1 2.7 L15.4 3 C15.9 3.5 15.9 4.2 15.4 4.7 L8.5 11.6Z" stroke="#5f2fc0" stroke-width="1.35" fill="none" stroke-linejoin="round"/></svg><svg class="ai" style="left:1224px" viewBox="0 0 18 16"><path d="M9 4.2 C7.6 3.2 5 2.9 2.6 3.3 V12.9 C5 12.6 7.6 12.8 9 13.6 C10.4 12.8 13 12.6 15.4 12.9 V3.3 C13 2.9 10.4 3.2 9 4.2Z" stroke="#1cbde4" stroke-width="1.35" fill="none" stroke-linejoin="round"/><path d="M9 4.2 V13.6" stroke="#1cbde4" stroke-width="1.6"/></svg><svg class="ai" style="left:1251px" viewBox="0 0 18 16"><path d="M2.8 4 H13" stroke="#e3202e" stroke-width="1.5"/><path d="M6 3.8 V2.6 H9.8 V3.8" stroke="#e3202e" stroke-width="1.2" fill="none"/><path d="M4 4.6 L4.6 13.4 C4.6 13.8 4.9 14.1 5.3 14.1 H10.5 C10.9 14.1 11.2 13.8 11.2 13.4 L11.8 4.6" stroke="#e3202e" stroke-width="1.4" fill="none"/><path d="M6.6 6.5 V12 M9.2 6.5 V12" stroke="#e3202e" stroke-width="1.2"/></svg>
</div>
<div class="tr hr" style="top:202.54px;width:1320px">
<div class="td" style="left:0px;width:100px">4</div>
<div class="td" style="left:100px;width:150px">2021-07-13 11:17:52</div>
<div class="td" style="left:250px;width:101px">app</div>
<div class="td" style="left:351px;width:100px">completed</div>
<div class="td" style="left:451px;width:151px">2021-07-13 11:17:53</div>
<div class="td" style="left:602px;width:175px">00:00:00</div>
<div class="td" style="left:777px;width:101px">8</div>
<div class="td" style="left:878px;width:101px">0</div>
<div class="td" style="left:979px;width:100px">8</div>
<div class="td" style="left:1079px;width:100px">8</div>
<svg class="ai" style="left:1197px" viewBox="0 0 18 16"><path d="M8 4 H3.2 C2.5 4 2 4.5 2 5.2 V13.2 C2 13.9 2.5 14.4 3.2 14.4 H11.8 C12.5 14.4 13 13.9 13 13.2 V8.5" stroke="#5f2fc0" stroke-width="1.35" fill="none"/><path d="M6 12.2 L6.5 9.6 L13.4 2.7 C13.9 2.2 14.6 2.2 15.1 2.7 L15.4 3 C15.9 3.5 15.9 4.2 15.4 4.7 L8.5 11.6Z" stroke="#5f2fc0" stroke-width="1.35" fill="none" stroke-linejoin="round"/></svg><svg class="ai" style="left:1224px" viewBox="0 0 18 16"><path d="M9 4.2 C7.6 3.2 5 2.9 2.6 3.3 V12.9 C5 12.6 7.6 12.8 9 13.6 C10.4 12.8 13 12.6 15.4 12.9 V3.3 C13 2.9 10.4 3.2 9 4.2Z" stroke="#1cbde4" stroke-width="1.35" fill="none" stroke-linejoin="round"/><path d="M9 4.2 V13.6" stroke="#1cbde4" stroke-width="1.6"/></svg><svg class="ai" style="left:1251px" viewBox="0 0 18 16"><path d="M2.8 4 H13" stroke="#e3202e" stroke-width="1.5"/><path d="M6 3.8 V2.6 H9.8 V3.8" stroke="#e3202e" stroke-width="1.2" fill="none"/><path d="M4 4.6 L4.6 13.4 C4.6 13.8 4.9 14.1 5.3 14.1 H10.5 C10.9 14.1 11.2 13.8 11.2 13.4 L11.8 4.6" stroke="#e3202e" stroke-width="1.4" fill="none"/><path d="M6.6 6.5 V12 M9.2 6.5 V12" stroke="#e3202e" stroke-width="1.2"/></svg>
</div>
<div class="tr hr" style="top:230.63px;width:1320px">
<div class="td" style="left:0px;width:100px">3</div>
<div class="td" style="left:100px;width:150px">2021-07-13 11:13:25</div>
<div class="td" style="left:250px;width:101px">app</div>
<div class="td" style="left:351px;width:100px">completed</div>
<div class="td" style="left:451px;width:151px">2021-07-13 11:13:26</div>
<div class="td" style="left:602px;width:175px">00:00:00</div>
<div class="td" style="left:777px;width:101px">8</div>
<div class="td" style="left:878px;width:101px">0</div>
<div class="td" style="left:979px;width:100px">8</div>
<div class="td" style="left:1079px;width:100px">8</div>
<svg class="ai" style="left:1197px" viewBox="0 0 18 16"><path d="M8 4 H3.2 C2.5 4 2 4.5 2 5.2 V13.2 C2 13.9 2.5 14.4 3.2 14.4 H11.8 C12.5 14.4 13 13.9 13 13.2 V8.5" stroke="#5f2fc0" stroke-width="1.35" fill="none"/><path d="M6 12.2 L6.5 9.6 L13.4 2.7 C13.9 2.2 14.6 2.2 15.1 2.7 L15.4 3 C15.9 3.5 15.9 4.2 15.4 4.7 L8.5 11.6Z" stroke="#5f2fc0" stroke-width="1.35" fill="none" stroke-linejoin="round"/></svg><svg class="ai" style="left:1224px" viewBox="0 0 18 16"><path d="M9 4.2 C7.6 3.2 5 2.9 2.6 3.3 V12.9 C5 12.6 7.6 12.8 9 13.6 C10.4 12.8 13 12.6 15.4 12.9 V3.3 C13 2.9 10.4 3.2 9 4.2Z" stroke="#1cbde4" stroke-width="1.35" fill="none" stroke-linejoin="round"/><path d="M9 4.2 V13.6" stroke="#1cbde4" stroke-width="1.6"/></svg><svg class="ai" style="left:1251px" viewBox="0 0 18 16"><path d="M2.8 4 H13" stroke="#e3202e" stroke-width="1.5"/><path d="M6 3.8 V2.6 H9.8 V3.8" stroke="#e3202e" stroke-width="1.2" fill="none"/><path d="M4 4.6 L4.6 13.4 C4.6 13.8 4.9 14.1 5.3 14.1 H10.5 C10.9 14.1 11.2 13.8 11.2 13.4 L11.8 4.6" stroke="#e3202e" stroke-width="1.4" fill="none"/><path d="M6.6 6.5 V12 M9.2 6.5 V12" stroke="#e3202e" stroke-width="1.2"/></svg>
</div>
<div class="tr hr" style="top:258.72px;width:1320px">
<div class="td" style="left:0px;width:100px">2</div>
<div class="td" style="left:100px;width:150px">2021-07-13 11:01:39</div>
<div class="td" style="left:250px;width:101px">app</div>
<div class="td" style="left:351px;width:100px">completed</div>
<div class="td" style="left:451px;width:151px">2021-07-13 11:01:46</div>
<div class="td" style="left:602px;width:175px">00:00:00</div>
<div class="td" style="left:777px;width:101px">8</div>
<div class="td" style="left:878px;width:101px">0</div>
<div class="td" style="left:979px;width:100px">8</div>
<div class="td" style="left:1079px;width:100px">8</div>
<svg class="ai" style="left:1197px" viewBox="0 0 18 16"><path d="M8 4 H3.2 C2.5 4 2 4.5 2 5.2 V13.2 C2 13.9 2.5 14.4 3.2 14.4 H11.8 C12.5 14.4 13 13.9 13 13.2 V8.5" stroke="#5f2fc0" stroke-width="1.35" fill="none"/><path d="M6 12.2 L6.5 9.6 L13.4 2.7 C13.9 2.2 14.6 2.2 15.1 2.7 L15.4 3 C15.9 3.5 15.9 4.2 15.4 4.7 L8.5 11.6Z" stroke="#5f2fc0" stroke-width="1.35" fill="none" stroke-linejoin="round"/></svg><svg class="ai" style="left:1224px" viewBox="0 0 18 16"><path d="M9 4.2 C7.6 3.2 5 2.9 2.6 3.3 V12.9 C5 12.6 7.6 12.8 9 13.6 C10.4 12.8 13 12.6 15.4 12.9 V3.3 C13 2.9 10.4 3.2 9 4.2Z" stroke="#1cbde4" stroke-width="1.35" fill="none" stroke-linejoin="round"/><path d="M9 4.2 V13.6" stroke="#1cbde4" stroke-width="1.6"/></svg><svg class="ai" style="left:1251px" viewBox="0 0 18 16"><path d="M2.8 4 H13" stroke="#e3202e" stroke-width="1.5"/><path d="M6 3.8 V2.6 H9.8 V3.8" stroke="#e3202e" stroke-width="1.2" fill="none"/><path d="M4 4.6 L4.6 13.4 C4.6 13.8 4.9 14.1 5.3 14.1 H10.5 C10.9 14.1 11.2 13.8 11.2 13.4 L11.8 4.6" stroke="#e3202e" stroke-width="1.4" fill="none"/><path d="M6.6 6.5 V12 M9.2 6.5 V12" stroke="#e3202e" stroke-width="1.2"/></svg>
</div>
</div>

<div style="position:absolute;left:320px;top:540px;font-size:15px;line-height:18px;color:#363c48;-webkit-text-stroke:0.1px currentColor">Log</div>
<div class="inp" style="left:358px;top:536px;width:104px;height:24px"><span>Filter...</span></div>
<svg class="ic" style="left:444.5px;top:541px;width:11px;height:11px" viewBox="0 0 16 16"><path d="M0.5 1 H15.5 L9.8 8 V15.5 L6.2 13 V8Z" fill="#1372e0"/></svg>
<div style="position:absolute;left:1812px;top:548px;width:16px;height:16px;border-radius:3px;background:#c80000"></div>
<div style="position:absolute;left:1832px;top:548px;width:16px;height:16px;border-radius:3px;background:#ca7c00"></div>
<div style="position:absolute;left:1852px;top:548px;width:16px;height:16px;border-radius:3px;background:#009b4e"></div>
<div style="position:absolute;left:1872px;top:548px;width:16px;height:16px;border-radius:3px;background:#00b8e8"></div>
<div style="position:absolute;left:1892px;top:548px;width:16px;height:16px;border-radius:3px;background:#fe76a4"></div>

<svg class="ic" style="left:1812px;top:548px;width:16px;height:16px" viewBox="0 0 16 16"><path d="M4.2 8.3 L6.8 10.8 L11.8 5.4" stroke="#fff" stroke-width="1.6" fill="none"/></svg><svg class="ic" style="left:1832px;top:548px;width:16px;height:16px" viewBox="0 0 16 16"><path d="M4.2 8.3 L6.8 10.8 L11.8 5.4" stroke="#fff" stroke-width="1.6" fill="none"/></svg><svg class="ic" style="left:1852px;top:548px;width:16px;height:16px" viewBox="0 0 16 16"><path d="M4.2 8.3 L6.8 10.8 L11.8 5.4" stroke="#fff" stroke-width="1.6" fill="none"/></svg>
<div class="tbl log" style="left:320px;top:571px;width:1594px;height:450px">
<div class="thead lh" style="height:34px">
<div class="th" style="left:0px;width:100px">Level</div><div class="sep" style="left:100px"></div>
<div class="th" style="left:100px;width:150px">Time</div><div class="sep" style="left:250px"></div>
<div class="th" style="left:250px;width:251px">Context</div><div class="sep" style="left:501px"></div>
<div class="th" style="left:501px;width:904px">Message</div><div class="sep" style="left:1405px"></div>
</div>
<div class="tr" style="top:34.00px;width:1405px">
<div class="td" style="left:0;width:100px"><svg class="li" viewBox="0 0 12 12"><circle cx="6" cy="6" r="5.3" stroke="#2bb88a" stroke-width="1.1" fill="none"/><rect x="5.4" y="5" width="1.2" height="4" fill="#2bb88a"/><circle cx="6" cy="3.4" r="0.8" fill="#2bb88a"/></svg><span style="padding-left:15px">info</span></div>
<div class="td" style="left:100px;width:150px;letter-spacing:-0.4px">2021-08-12 15:14:42.613</div>
<div class="td ctx" style="left:250px;width:251px">evaluating job hr_doc_dept_to_azure</div>
<div class="td msg" style="left:501px;width:904px">Evaluating job hr_doc_dept_to_azure, instance hr_doc_dept_to_azure_20210812_000011.</div>
</div>
<div style="position:absolute;left:993px;top:61.00px;width:412px;height:1px;background:#c9ccd1"></div>
<div class="tr lalt" style="top:62.09px;width:1405px">
<div class="td" style="left:0;width:100px"><svg class="li" viewBox="0 0 12 12"><circle cx="6" cy="6" r="5.3" stroke="#2bb88a" stroke-width="1.1" fill="none"/><rect x="5.4" y="5" width="1.2" height="4" fill="#2bb88a"/><circle cx="6" cy="3.4" r="0.8" fill="#2bb88a"/></svg><span style="padding-left:15px">info</span></div>
<div class="td" style="left:100px;width:150px;letter-spacing:-0.4px">2021-08-12 15:14:42.639</div>
<div class="td ctx lnk" style="left:250px;width:251px">evaluating hr_doc_dept_to_azure/azuread_user_create</div>
<div class="td msg" style="left:501px;width:904px">8 (8) updates found evaluating job hr_doc_dept_to_azure, item azuread_user_create</div>
</div>
<div style="position:absolute;left:993px;top:89.09px;width:412px;height:1px;background:#c9ccd1"></div>
<div class="tr" style="top:90.18px;width:1405px">
<div class="td" style="left:0;width:100px"><svg class="li" viewBox="0 0 12 12"><circle cx="6" cy="6" r="5.3" stroke="#2bb88a" stroke-width="1.1" fill="none"/><rect x="5.4" y="5" width="1.2" height="4" fill="#2bb88a"/><circle cx="6" cy="3.4" r="0.8" fill="#2bb88a"/></svg><span style="padding-left:15px">info</span></div>
<div class="td" style="left:100px;width:150px;letter-spacing:-0.4px">2021-08-12 15:14:44.420</div>
<div class="td ctx" style="left:250px;width:251px">executing job hr_doc_dept_to_azure</div>
<div class="td msg" style="left:501px;width:904px">Executing job hr_doc_dept_to_azure, instance hr_doc_dept_to_azure_20210812_000011.</div>
</div>
<div style="position:absolute;left:993px;top:117.18px;width:412px;height:1px;background:#c9ccd1"></div>
<div class="tr lalt" style="top:118.27px;width:1405px">
<div class="td" style="left:0;width:100px"><svg class="li" viewBox="0 0 12 12"><circle cx="6" cy="6" r="5.3" stroke="#2bb88a" stroke-width="1.1" fill="none"/><rect x="5.4" y="5" width="1.2" height="4" fill="#2bb88a"/><circle cx="6" cy="3.4" r="0.8" fill="#2bb88a"/></svg><span style="padding-left:15px">info</span></div>
<div class="td" style="left:100px;width:150px;letter-spacing:-0.4px">2021-08-12 15:14:44.445</div>
<div class="td ctx lnk" style="left:250px;width:251px">executing hr_doc_dept_to_azure/azuread_user_create</div>
<div class="td msg" style="left:501px;width:904px">8 (8) updates found executing job hr_doc_dept_to_azure, item azuread_user_create</div>
</div>
<div style="position:absolute;left:993px;top:145.27px;width:412px;height:1px;background:#c9ccd1"></div>
<div class="tr" style="top:146.36px;width:1405px">
<div class="td" style="left:0;width:100px"><svg class="li" viewBox="0 0 12 12"><circle cx="6" cy="6" r="5.3" stroke="#e05a4e" stroke-width="1.1" fill="none"/><path d="M4.1 4.1 L7.9 7.9 M7.9 4.1 L4.1 7.9" stroke="#e05a4e" stroke-width="1.1"/></svg><span style="padding-left:15px">error</span></div>
<div class="td" style="left:100px;width:150px;letter-spacing:-0.4px">2021-08-12 15:14:44.638</div>
<div class="td ctx lnk red" style="left:250px;width:251px">executing hr_doc_dept_to_azure/azuread_user_create</div>
<div class="td msg" style="left:501px;width:904px">Error executing function user_create for system azuread</div>
</div>
<div style="position:absolute;left:993px;top:173.36px;width:412px;height:1px;background:#c9ccd1"></div>
<div class="tr lalt" style="top:174.45px;width:1405px">
<div class="td" style="left:0;width:100px"><svg class="li" viewBox="0 0 12 12"><circle cx="6" cy="6" r="5.3" stroke="#e05a4e" stroke-width="1.1" fill="none"/><path d="M4.1 4.1 L7.9 7.9 M7.9 4.1 L4.1 7.9" stroke="#e05a4e" stroke-width="1.1"/></svg><span style="padding-left:15px">error</span></div>
<div class="td" style="left:100px;width:150px;letter-spacing:-0.4px">2021-08-12 15:14:44.651</div>
<div class="td ctx lnk red" style="left:250px;width:251px">executing hr_doc_dept_to_azure/azuread_user_create</div>
<div class="td msg" style="left:501px;width:904px">Error executing function user_create for system azuread</div>
</div>
<div style="position:absolute;left:993px;top:201.45px;width:412px;height:1px;background:#c9ccd1"></div>
<div class="tr" style="top:202.54px;width:1405px">
<div class="td" style="left:0;width:100px"><svg class="li" viewBox="0 0 12 12"><circle cx="6" cy="6" r="5.3" stroke="#e05a4e" stroke-width="1.1" fill="none"/><path d="M4.1 4.1 L7.9 7.9 M7.9 4.1 L4.1 7.9" stroke="#e05a4e" stroke-width="1.1"/></svg><span style="padding-left:15px">error</span></div>
<div class="td" style="left:100px;width:150px;letter-spacing:-0.4px">2021-08-12 15:14:44.652</div>
<div class="td ctx lnk red" style="left:250px;width:251px">executing hr_doc_dept_to_azure/azuread_user_create</div>
<div class="td msg" style="left:501px;width:904px">Error executing function user_create for system azuread</div>
</div>
<div style="position:absolute;left:993px;top:229.54px;width:412px;height:1px;background:#c9ccd1"></div>
<div class="tr lalt" style="top:230.63px;width:1405px">
<div class="td" style="left:0;width:100px"><svg class="li" viewBox="0 0 12 12"><circle cx="6" cy="6" r="5.3" stroke="#e05a4e" stroke-width="1.1" fill="none"/><path d="M4.1 4.1 L7.9 7.9 M7.9 4.1 L4.1 7.9" stroke="#e05a4e" stroke-width="1.1"/></svg><span style="padding-left:15px">error</span></div>
<div class="td" style="left:100px;width:150px;letter-spacing:-0.4px">2021-08-12 15:14:44.653</div>
<div class="td ctx lnk red" style="left:250px;width:251px">executing hr_doc_dept_to_azure/azuread_user_create</div>
<div class="td msg" style="left:501px;width:904px">Error executing function user_create for system azuread</div>
</div>
<div style="position:absolute;left:993px;top:257.63px;width:412px;height:1px;background:#c9ccd1"></div>
<div class="tr" style="top:258.72px;width:1405px">
<div class="td" style="left:0;width:100px"><svg class="li" viewBox="0 0 12 12"><circle cx="6" cy="6" r="5.3" stroke="#e05a4e" stroke-width="1.1" fill="none"/><path d="M4.1 4.1 L7.9 7.9 M7.9 4.1 L4.1 7.9" stroke="#e05a4e" stroke-width="1.1"/></svg><span style="padding-left:15px">error</span></div>
<div class="td" style="left:100px;width:150px;letter-spacing:-0.4px">2021-08-12 15:14:44.654</div>
<div class="td ctx lnk red" style="left:250px;width:251px">executing hr_doc_dept_to_azure/azuread_user_create</div>
<div class="td msg" style="left:501px;width:904px">Error executing function user_create for system azuread</div>
</div>
<div style="position:absolute;left:993px;top:285.72px;width:412px;height:1px;background:#c9ccd1"></div>
<div class="tr lalt" style="top:286.81px;width:1405px">
<div class="td" style="left:0;width:100px"><svg class="li" viewBox="0 0 12 12"><circle cx="6" cy="6" r="5.3" stroke="#e05a4e" stroke-width="1.1" fill="none"/><path d="M4.1 4.1 L7.9 7.9 M7.9 4.1 L4.1 7.9" stroke="#e05a4e" stroke-width="1.1"/></svg><span style="padding-left:15px">error</span></div>
<div class="td" style="left:100px;width:150px;letter-spacing:-0.4px">2021-08-12 15:14:44.661</div>
<div class="td ctx lnk red" style="left:250px;width:251px">executing hr_doc_dept_to_azure/azuread_user_create</div>
<div class="td msg" style="left:501px;width:904px">Error executing function user_create for system azuread</div>
</div>
<div style="position:absolute;left:993px;top:313.81px;width:412px;height:1px;background:#c9ccd1"></div>
<div class="tr" style="top:314.90px;width:1405px">
<div class="td" style="left:0;width:100px"><svg class="li" viewBox="0 0 12 12"><circle cx="6" cy="6" r="5.3" stroke="#e05a4e" stroke-width="1.1" fill="none"/><path d="M4.1 4.1 L7.9 7.9 M7.9 4.1 L4.1 7.9" stroke="#e05a4e" stroke-width="1.1"/></svg><span style="padding-left:15px">error</span></div>
<div class="td" style="left:100px;width:150px;letter-spacing:-0.4px">2021-08-12 15:14:44.662</div>
<div class="td ctx lnk red" style="left:250px;width:251px">executing hr_doc_dept_to_azure/azuread_user_create</div>
<div class="td msg" style="left:501px;width:904px">Error executing function user_create for system azuread</div>
</div>
<div style="position:absolute;left:993px;top:341.90px;width:412px;height:1px;background:#c9ccd1"></div>
<div class="tr lalt" style="top:342.99px;width:1405px">
<div class="td" style="left:0;width:100px"><svg class="li" viewBox="0 0 12 12"><circle cx="6" cy="6" r="5.3" stroke="#e05a4e" stroke-width="1.1" fill="none"/><path d="M4.1 4.1 L7.9 7.9 M7.9 4.1 L4.1 7.9" stroke="#e05a4e" stroke-width="1.1"/></svg><span style="padding-left:15px">error</span></div>
<div class="td" style="left:100px;width:150px;letter-spacing:-0.4px">2021-08-12 15:14:44.663</div>
<div class="td ctx lnk red" style="left:250px;width:251px">executing hr_doc_dept_to_azure/azuread_user_create</div>
<div class="td msg" style="left:501px;width:904px">Error executing function user_create for system azuread</div>
</div>
<div style="position:absolute;left:993px;top:369.99px;width:412px;height:1px;background:#c9ccd1"></div>
</div>
<div style="position:absolute;left:308px;top:528px;width:1006px;height:424px;border-radius:2px;box-shadow:inset 0 0 0 1px rgba(0,0,0,0.16),inset 0 0 0 2px rgba(0,0,0,0.07),0 0 0 3000px rgba(0,0,0,0.314);pointer-events:none"></div>

<div class="frame" style="left:0;top:0;width:1920px;height:1px"></div>
<div class="frame" style="left:0;top:0;width:1px;height:1133px"></div>
<div class="frame" style="left:1919px;top:0;width:1px;height:1133px"></div>
<div class="frame" style="left:0;top:1131px;width:1920px;height:2px;background:linear-gradient(#0e1830 50%,#000 50%)"></div>
<div style="position:absolute;left:1px;top:1px;width:1918px;height:1130px;border:1px solid rgba(255,255,255,0.12);pointer-events:none"></div>

</body></html>
